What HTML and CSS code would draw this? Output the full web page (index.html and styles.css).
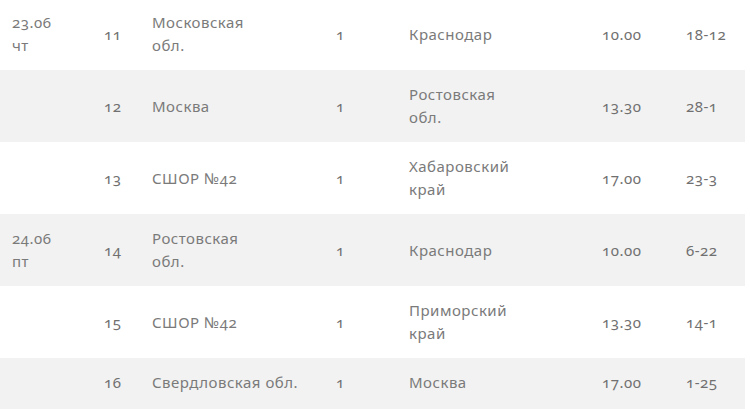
FILE: index.html
```html
<!DOCTYPE html>
<html lang="ru">
<head>
<meta charset="utf-8">
<title>Расписание</title>
<link rel="stylesheet" href="styles.css">
</head>
<body>
<div class="wrap">
<table class="schedule">
<colgroup>
<col class="c-date"><col class="c-num"><col class="c-team"><col class="c-one"><col class="c-team2"><col class="c-time"><col class="c-score">
</colgroup>
<tbody>
<tr>
<td>23.06<br>чт</td><td class="num">11</td><td>Московская<br>обл.</td><td class="num">1</td><td>Краснодар</td><td class="num">10.00</td><td class="num">18-12</td>
</tr>
<tr>
<td></td><td class="num">12</td><td>Москва</td><td class="num">1</td><td>Ростовская<br>обл.</td><td class="num">13.30</td><td class="num">28-1</td>
</tr>
<tr>
<td></td><td class="num">13</td><td>СШОР №42</td><td class="num">1</td><td>Хабаровский<br>край</td><td class="num">17.00</td><td class="num">23-3</td>
</tr>
<tr>
<td>24.06<br>пт</td><td class="num">14</td><td>Ростовская<br>обл.</td><td class="num">1</td><td>Краснодар</td><td class="num">10.00</td><td class="num">6-22</td>
</tr>
<tr>
<td></td><td class="num">15</td><td>СШОР №42</td><td class="num">1</td><td>Приморский<br>край</td><td class="num">13.30</td><td class="num">14-1</td>
</tr>
<tr class="last">
<td></td><td class="num">16</td><td>Свердловская обл.</td><td class="num">1</td><td>Москва</td><td class="num">17.00</td><td class="num">1-25</td>
</tr>
</tbody>
</table>
</div>
</body>
</html>
```
FILE: styles.css
```css
html, body {
  margin: 0;
  padding: 0;
  background: #fff;
}
.wrap {
  width: 745px;
  height: 409px;
  overflow: hidden;
}
.schedule {
  width: 745px;
  margin-top: -2px;
  border-collapse: collapse;
  table-layout: fixed;
  font-family: "Noto Sans", sans-serif;
  font-size: 15px;
  line-height: 23px;
  letter-spacing: 0.5px;
  color: #7a7a7a;
  font-variant-numeric: oldstyle-nums;
}
.c-date { width: 104px; }
.c-num { width: 48px; }
.c-team { width: 184px; }
.c-one { width: 73px; }
.c-team2 { width: 193px; }
.c-time { width: 84px; }
.c-score { width: 59px; }
.schedule tr:nth-child(even) {
  background: #f2f2f2;
}
.schedule td {
  padding: 13px 0;
  vertical-align: middle;
  white-space: nowrap;
}
.schedule .last td {
  padding-bottom: 18px;
}
.schedule td:first-child {
  padding-left: 12px;
}
.num {
  color: #707070;
  letter-spacing: 0.5px;
}
```
